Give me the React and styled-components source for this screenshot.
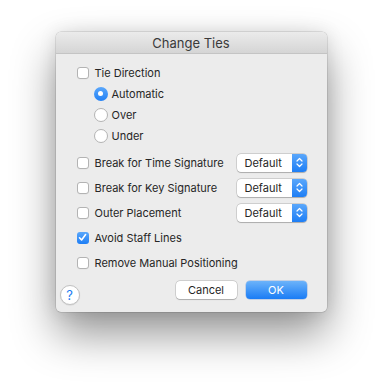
import React from "react";
import styled, { createGlobalStyle } from "styled-components";

const GlobalStyle = createGlobalStyle`
  html, body {
    margin: 0;
    padding: 0;
    background: #ffffff;
  }
  body {
    font-family: Inter, "Noto Sans", "Liberation Sans", sans-serif;
    -webkit-font-smoothing: antialiased;
  }
`;

const Page = styled.div`
  display: flex;
  justify-content: center;
  padding-top: 32px;
  height: 392px;
  box-sizing: border-box;
`;

const Dialog = styled.div`
  width: 271px;
  height: 280px;
  border-radius: 5px;
  background: #ececec;
  overflow: hidden;
  display: flex;
  flex-direction: column;
  box-shadow:
    0 0 0 0.5px rgba(0, 0, 0, 0.18),
    0 22px 44px rgba(0, 0, 0, 0.42),
    0 0 18px rgba(0, 0, 0, 0.1);
`;

const TitleBar = styled.div`
  height: 21px;
  flex: none;
  display: flex;
  align-items: center;
  justify-content: center;
  background: linear-gradient(#ebebeb, #d5d5d5);
  border-bottom: 1px solid #c4c4c4;
  font-size: 13px;
  color: #3a3a3a;
`;

const Body = styled.div`
  flex: 1;
  display: flex;
  flex-direction: column;
  padding: 9px 20px 0 21px;
`;

const Row = styled.div`
  display: flex;
  align-items: center;
  height: ${(p) => p.$h || 20}px;
  padding-left: ${(p) => (p.$indent ? 17 : 0)}px;
  margin-top: ${(p) => p.$mt || 0}px;
`;

const Label = styled.label`
  display: flex;
  align-items: center;
  font-size: 11px;
  color: #262626;
  white-space: nowrap;
  flex: 1;
`;

const Box = styled.span`
  width: 12px;
  height: 12px;
  box-sizing: border-box;
  border-radius: 3px;
  margin-right: 6px;
  flex: none;
  display: flex;
  align-items: center;
  justify-content: center;
  background: ${(p) =>
    p.$checked ? "linear-gradient(#5aa7fb, #1e7ef5)" : "#ffffff"};
  border: ${(p) => (p.$checked ? "none" : "1px solid #b3b3b3")};
  box-shadow: ${(p) => (p.$checked ? "none" : "0 0.5px 0 rgba(0,0,0,0.05)")};
`;

const Radio = styled.span`
  width: 14px;
  height: 14px;
  box-sizing: border-box;
  border-radius: 50%;
  margin-right: 4px;
  flex: none;
  display: flex;
  align-items: center;
  justify-content: center;
  background: ${(p) =>
    p.$checked ? "linear-gradient(#5aa7fb, #2281f5)" : "#ffffff"};
  border: ${(p) => (p.$checked ? "none" : "1px solid #b3b3b3")};

  &::after {
    content: "";
    display: ${(p) => (p.$checked ? "block" : "none")};
    width: 5px;
    height: 5px;
    border-radius: 50%;
    background: #ffffff;
  }
`;

const Popup = styled.div`
  width: 70px;
  height: 18px;
  box-sizing: border-box;
  flex: none;
  display: flex;
  border-radius: 4px;
  overflow: hidden;
  background: #ffffff;
  box-shadow: 0 0 0 0.5px rgba(0, 0, 0, 0.22), 0 0.5px 1px rgba(0, 0, 0, 0.18);
  font-size: 11px;
  color: #262626;
`;

const PopupText = styled.span`
  flex: 1;
  display: flex;
  align-items: center;
  padding-left: 8px;
`;

const PopupArrows = styled.span`
  width: 15px;
  flex: none;
  display: flex;
  align-items: center;
  justify-content: center;
  background: linear-gradient(#5aa7fb, #1e7ef5);
`;

const Footer = styled.div`
  display: flex;
  align-items: flex-start;
  margin-top: 6px;
  margin-left: -17px;
`;

const Help = styled.div`
  width: 20px;
  height: 20px;
  box-sizing: border-box;
  margin-top: 4px;
  border-radius: 50%;
  background: #ffffff;
  border: 1px solid #c2c2c2;
  box-shadow: 0 0.5px 1px rgba(0, 0, 0, 0.12);
  display: flex;
  align-items: center;
  justify-content: center;
  font-size: 13px;
  color: #1d7cf2;
`;

const Buttons = styled.div`
  margin-left: auto;
  display: flex;
  gap: 9px;
`;

const Button = styled.button`
  width: 61px;
  height: 18px;
  padding: 0;
  border: none;
  border-radius: 4px;
  font-family: inherit;
  font-size: 11px;
  display: flex;
  align-items: center;
  justify-content: center;
  color: ${(p) => (p.$primary ? "#ffffff" : "#262626")};
  background: ${(p) =>
    p.$primary ? "linear-gradient(#6cb3fa, #1a7cf5)" : "#ffffff"};
  box-shadow: ${(p) =>
    p.$primary
      ? "0 0 0 0.5px rgba(0, 80, 200, 0.35)"
      : "0 0 0 0.5px rgba(0,0,0,0.22), 0 0.5px 1px rgba(0,0,0,0.18)"};
`;

function Check({ checked, children }) {
  return (
    <Label>
      <Box $checked={checked}>
        {checked && (
          <svg width="9" height="9" viewBox="0 0 9 9">
            <path
              d="M1.5 4.8 L3.6 7 L7.6 1.6"
              fill="none"
              stroke="#fff"
              strokeWidth="1.6"
              strokeLinecap="round"
              strokeLinejoin="round"
            />
          </svg>
        )}
      </Box>
      {children}
    </Label>
  );
}

function RadioItem({ checked, children }) {
  return (
    <Label>
      <Radio $checked={checked} />
      {children}
    </Label>
  );
}

function Select({ value }) {
  return (
    <Popup>
      <PopupText>{value}</PopupText>
      <PopupArrows>
        <svg width="7" height="11" viewBox="0 0 7 11">
          <path
            d="M1 4 L3.5 1.5 L6 4 M1 7 L3.5 9.5 L6 7"
            fill="none"
            stroke="#fff"
            strokeWidth="1.2"
            strokeLinecap="round"
            strokeLinejoin="round"
          />
        </svg>
      </PopupArrows>
    </Popup>
  );
}

export default function App() {
  return (
    <Page>
      <GlobalStyle />
      <Dialog>
        <TitleBar>Change Ties</TitleBar>
        <Body>
          <Row>
            <Check>Tie Direction</Check>
          </Row>
          <Row $h={21} $indent>
            <RadioItem checked>Automatic</RadioItem>
          </Row>
          <Row $h={21} $indent>
            <RadioItem>Over</RadioItem>
          </Row>
          <Row $h={21} $indent>
            <RadioItem>Under</RadioItem>
          </Row>
          <Row $h={25} $mt={4}>
            <Check>Break for Time Signature</Check>
            <Select value="Default" />
          </Row>
          <Row $h={25}>
            <Check>Break for Key Signature</Check>
            <Select value="Default" />
          </Row>
          <Row $h={25}>
            <Check>Outer Placement</Check>
            <Select value="Default" />
          </Row>
          <Row $h={25}>
            <Check checked>Avoid Staff Lines</Check>
          </Row>
          <Row $h={25}>
            <Check>Remove Manual Positioning</Check>
          </Row>
          <Footer>
            <Help>?</Help>
            <Buttons>
              <Button>Cancel</Button>
              <Button $primary>OK</Button>
            </Buttons>
          </Footer>
        </Body>
      </Dialog>
    </Page>
  );
}
